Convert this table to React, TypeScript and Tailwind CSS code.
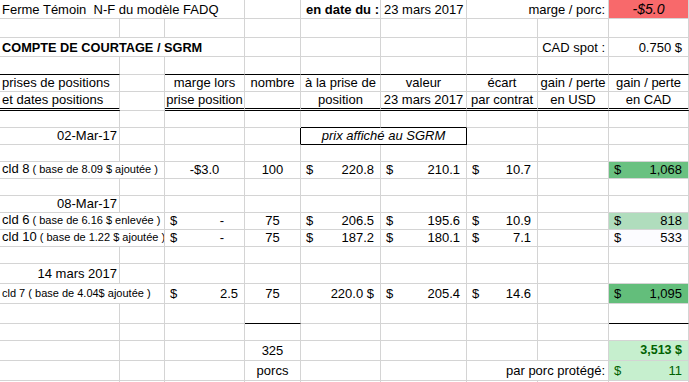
import React from "react";

type CP = { className?: string; children?: React.ReactNode };

function Cell({ className = "", children }: CP) {
  return (
    <div
      className={
        "flex items-end whitespace-pre overflow-hidden border-r border-b border-[#d4d4d4] leading-[15px] pb-[1px] " +
        className
      }
    >
      {children}
    </div>
  );
}

function Acct({ v, className = "" }: { v: string; className?: string }) {
  return (
    <Cell className={"justify-between pl-[5px] pr-[6px] " + className}>
      <span>$</span>
      <span>{v}</span>
    </Cell>
  );
}

function Empty({ n, className = "" }: { n: number; className?: string }) {
  return (
    <>
      {Array.from({ length: n }).map((_, i) => (
        <Cell key={i} className={className} />
      ))}
    </>
  );
}

function Lbl({ main, small }: { main: string; small: string }) {
  return (
    <span>
      {main}
      <span className="text-[11px]"> {small}</span>
    </span>
  );
}

export default function App() {
  const blk = "border-b-black";
  return (
    <div
      className="w-[689px] h-[382px] overflow-hidden bg-white text-[13px] text-black"
      style={{ fontFamily: '"Liberation Sans", Arial, sans-serif' }}
    >
      <div className="grid grid-cols-[120px_45px_80px_56px_80px_86px_71px_71px_80px] grid-rows-[19px_19px_19px_18px_17px_19px_17px_17px_17px_17px_17px_17px_17px_17px_17px_20px_20px_20px_17px_20px_20px_20px]">
        {/* Row 1 */}
        <Cell className="col-span-3 pl-[2px]">Ferme Témoin  N-F du modèle FADQ</Cell>
        <Cell />
        <Cell className="justify-end pr-[1px] font-bold">en date du :</Cell>
        <Cell className="pl-[3px]">23 mars 2017</Cell>
        <Cell className="col-span-2 justify-end pr-[3px]">marge / porc:</Cell>
        <Cell className="justify-center bg-[#f8696b] italic text-[14px]">-$5.0</Cell>

        {/* Row 2 */}
        <Empty n={9} />

        {/* Row 3 */}
        <Cell className="col-span-3 pl-[2px] font-bold text-[12.75px]">COMPTE DE COURTAGE / SGRM</Cell>
        <Empty n={4} />
        <Cell className="justify-end pr-[3px]">CAD spot :</Cell>
        <Cell className="justify-end pr-[6px]">0.750 $</Cell>

        {/* Row 4 */}
        <Cell className={blk} />
        <Cell />
        <Empty n={7} className={blk} />

        {/* Row 5 */}
        <Cell className="pl-[2px]">prises de positions</Cell>
        <Cell />
        <Cell className="justify-center">marge lors</Cell>
        <Cell className="justify-center">nombre</Cell>
        <Cell className="justify-center">à la prise de</Cell>
        <Cell className="justify-center">valeur</Cell>
        <Cell className="justify-center">écart</Cell>
        <Cell className="justify-center">gain / perte</Cell>
        <Cell className="justify-center">gain / perte</Cell>

        {/* Row 6 */}
        <Cell className="pl-[2px] border-b-[3px] border-double border-b-black">et dates positions</Cell>
        <Cell />
        <Cell className="justify-center border-b-[3px] border-double border-b-black">prise position</Cell>
        <Cell className="justify-center border-b-[3px] border-double border-b-black" />
        <Cell className="justify-center border-b-[3px] border-double border-b-black">position</Cell>
        <Cell className="justify-center border-b-[3px] border-double border-b-black">23 mars 2017</Cell>
        <Cell className="justify-center border-b-[3px] border-double border-b-black">par contrat</Cell>
        <Cell className="justify-center border-b-[3px] border-double border-b-black">en USD</Cell>
        <Cell className="justify-center border-b-[3px] border-double border-b-black">en CAD</Cell>

        {/* Row 7 */}
        <Empty n={4} />
        <Cell className={blk} />
        <Cell className={blk} />
        <Empty n={3} />

        {/* Row 8 */}
        <Cell className="justify-end pr-[2px]">02-Mar-17</Cell>
        <Cell />
        <Cell />
        <Cell className="border-r-black" />
        <Cell className="col-span-2 justify-center italic border-r-black border-b-black">prix affiché au SGRM</Cell>
        <Empty n={3} />

        {/* Row 9 */}
        <Empty n={9} />

        {/* Row 10 */}
        <Cell className="col-span-2 pl-[2px]">
          <Lbl main="cld 8" small="( base de 8.09 $ ajoutée )" />
        </Cell>
        <Cell className="justify-center">-$3.0</Cell>
        <Cell className="justify-center">100</Cell>
        <Acct v="220.8" />
        <Acct v="210.1" />
        <Acct v="10.7" />
        <Cell />
        <Acct v="1,068" className="bg-[#6ac181]" />

        {/* Row 11 */}
        <Empty n={9} />

        {/* Row 12 */}
        <Cell className="justify-end pr-[2px]">08-Mar-17</Cell>
        <Empty n={8} />

        {/* Row 13 */}
        <Cell className="col-span-2 pl-[2px]">
          <Lbl main="cld 6" small="( base de 6.16 $ enlevée )" />
        </Cell>
        <Cell className="justify-between pl-[5px] pr-[20px]">
          <span>$</span>
          <span>-</span>
        </Cell>
        <Cell className="justify-center">75</Cell>
        <Acct v="206.5" />
        <Acct v="195.6" />
        <Acct v="10.9" />
        <Cell />
        <Acct v="818" className="bg-[#b0ddbd]" />

        {/* Row 14 */}
        <Cell className="col-span-2 pl-[2px]">
          <Lbl main="cld 10" small="( base de 1.22 $ ajoutée )" />
        </Cell>
        <Cell className="justify-between pl-[5px] pr-[20px]">
          <span>$</span>
          <span>-</span>
        </Cell>
        <Cell className="justify-center">75</Cell>
        <Acct v="187.2" />
        <Acct v="180.1" />
        <Acct v="7.1" />
        <Cell />
        <Acct v="533" className="bg-[#fcfcff]" />

        {/* Row 15 */}
        <Empty n={9} />

        {/* Row 16 */}
        <Cell className="justify-end pr-[2px] pb-[2px]">14 mars 2017</Cell>
        <Empty n={8} />

        {/* Row 17 */}
        <Cell className="col-span-2 pl-[2px] text-[11px] pb-[2px]">cld 7 ( base de 4.04$ ajoutée )</Cell>
        <Acct v="2.5" className="pb-[2px]" />
        <Cell className="justify-center pb-[2px]">75</Cell>
        <Cell className="justify-end pr-[6px] pb-[2px]">220.0 $</Cell>
        <Acct v="205.4" className="pb-[2px]" />
        <Acct v="14.6" className="pb-[2px]" />
        <Cell />
        <Acct v="1,095" className="bg-[#63be7b] pb-[2px]" />

        {/* Row 18 */}
        <Empty n={3} />
        <Cell className={blk} />
        <Empty n={4} />
        <Cell className={blk} />

        {/* Row 19 */}
        <Empty n={9} />

        {/* Row 20 */}
        <Empty n={3} />
        <Cell className="justify-center pb-[2px]">325</Cell>
        <Empty n={4} />
        <Cell className="justify-end pr-[6px] pb-[2px] bg-[#c6efce] text-[#006100] font-bold text-[12.5px]">3,513 $</Cell>

        {/* Row 21 */}
        <Empty n={3} />
        <Cell className="justify-center pb-[2px]">porcs</Cell>
        <Cell />
        <Cell />
        <Cell className="col-span-2 justify-end pr-[3px] pb-[2px]">par porc protégé:</Cell>
        <Acct v="11" className="bg-[#c6efce] text-[#006100] pb-[2px]" />

        {/* Row 22 */}
        <Empty n={9} />
      </div>
    </div>
  );
}
